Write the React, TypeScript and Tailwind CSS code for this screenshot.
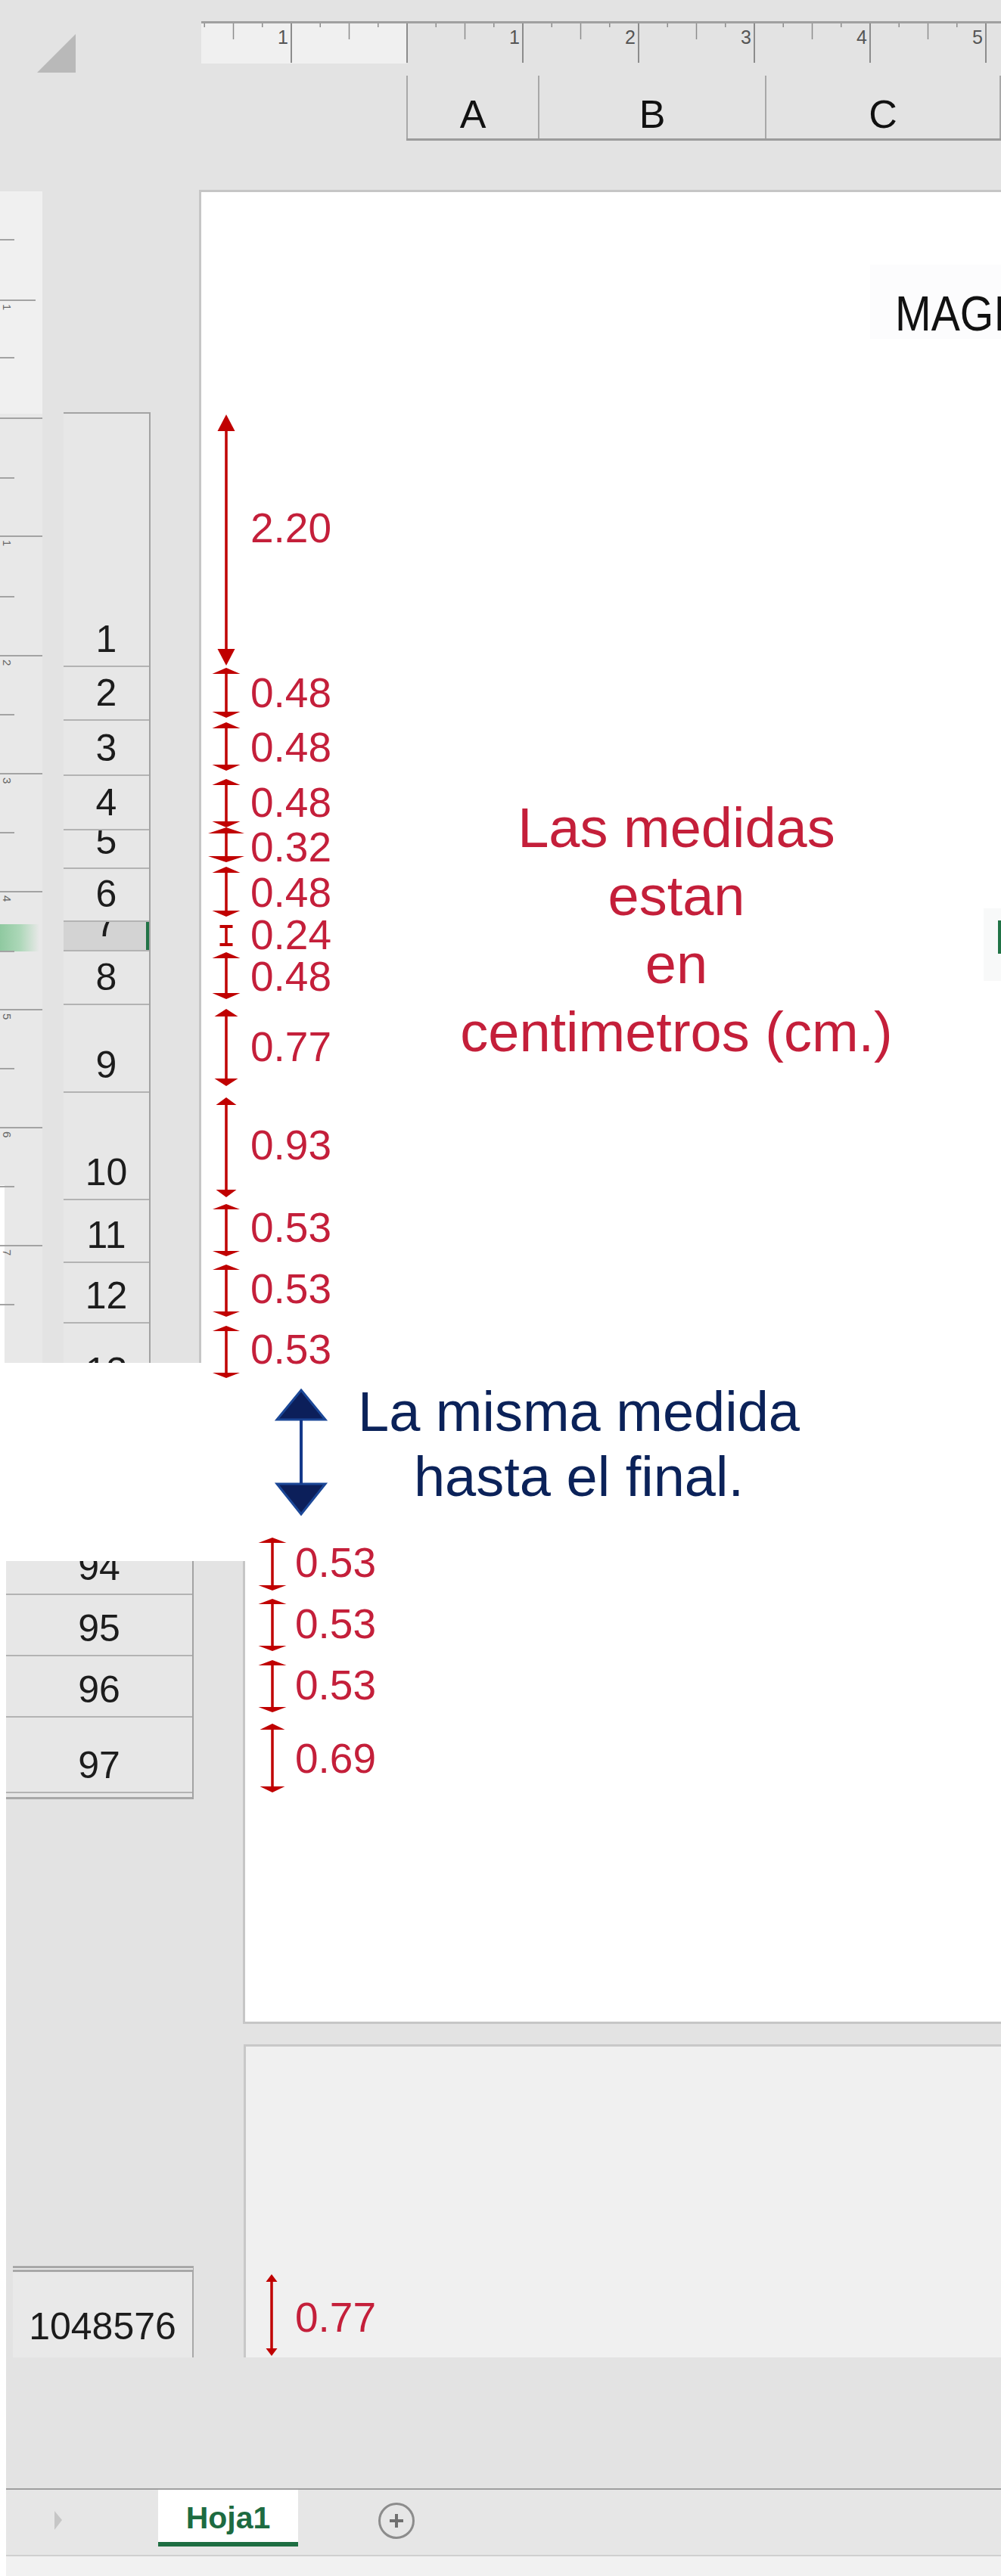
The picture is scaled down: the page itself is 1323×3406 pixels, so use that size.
import React from 'react';

const RED = '#c00000';

const TOP_ROWS = [
  { n: '1', h: 335 },
  { n: '2', h: 71 },
  { n: '3', h: 73 },
  { n: '4', h: 72 },
  { n: '5', h: 51 },
  { n: '6', h: 70 },
  { n: '7', h: 39, sel: true },
  { n: '8', h: 71 },
  { n: '9', h: 116 },
  { n: '10', h: 142 },
  { n: '11', h: 83 },
  { n: '12', h: 80 },
  { n: '13', h: 100 },
];

const BOTTOM_ROWS = [
  { n: '94', h: 45 },
  { n: '95', h: 81 },
  { n: '96', h: 81 },
  { n: '97', h: 100 },
];

// dimension arrows: x, top, bottom, head width, head height, bar = I-beam
type Dim = { x: number; y1: number; y2: number; w: number; h: number; bar?: boolean };

const DIMS: Dim[] = [
  { x: 299, y1: 548, y2: 880, w: 23, h: 22 },
  { x: 299, y1: 883, y2: 949, w: 37, h: 8 },
  { x: 299, y1: 955, y2: 1019, w: 37, h: 8 },
  { x: 299, y1: 1030, y2: 1094, w: 37, h: 8 },
  { x: 299, y1: 1094, y2: 1140, w: 48, h: 8 },
  { x: 299, y1: 1146, y2: 1212, w: 37, h: 8 },
  { x: 299, y1: 1223, y2: 1251, w: 17, h: 4, bar: true },
  { x: 299, y1: 1259, y2: 1321, w: 37, h: 8 },
  { x: 299, y1: 1334, y2: 1436, w: 31, h: 10 },
  { x: 299, y1: 1451, y2: 1583, w: 27, h: 10 },
  { x: 299, y1: 1592, y2: 1661, w: 36, h: 7 },
  { x: 299, y1: 1672, y2: 1741, w: 36, h: 7 },
  { x: 299, y1: 1753, y2: 1822, w: 36, h: 7 },
  { x: 360, y1: 2033, y2: 2103, w: 37, h: 7 },
  { x: 360, y1: 2114, y2: 2183, w: 37, h: 7 },
  { x: 360, y1: 2195, y2: 2264, w: 37, h: 7 },
  { x: 360, y1: 2279, y2: 2370, w: 33, h: 8 },
  { x: 359, y1: 3007, y2: 3115, w: 15, h: 10 },
];

const LABELS = [
  { t: '2.20', x: 333, b: 718 },
  { t: '0.48', x: 333, b: 936 },
  { t: '0.48', x: 333, b: 1008 },
  { t: '0.48', x: 333, b: 1081 },
  { t: '0.32', x: 333, b: 1140 },
  { t: '0.48', x: 333, b: 1200 },
  { t: '0.24', x: 333, b: 1256 },
  { t: '0.48', x: 333, b: 1311 },
  { t: '0.77', x: 333, b: 1404 },
  { t: '0.93', x: 333, b: 1534 },
  { t: '0.53', x: 333, b: 1643 },
  { t: '0.53', x: 333, b: 1724 },
  { t: '0.53', x: 333, b: 1804 },
  { t: '0.53', x: 392, b: 2086 },
  { t: '0.53', x: 392, b: 2167 },
  { t: '0.53', x: 392, b: 2248 },
  { t: '0.69', x: 392, b: 2345 },
  { t: '0.77', x: 392, b: 3084 },
];

function DimArrow({ d }: { d: Dim }) {
  if (d.bar) {
    return (
      <g fill={RED}>
        <rect x={d.x - 1.75} y={d.y1} width={3.5} height={d.y2 - d.y1} />
        <rect x={d.x - d.w / 2} y={d.y1} width={d.w} height={d.h} />
        <rect x={d.x - d.w / 2} y={d.y2 - d.h} width={d.w} height={d.h} />
      </g>
    );
  }
  return (
    <g fill={RED}>
      <rect x={d.x - 1.75} y={d.y1 + d.h - 1} width={3.5} height={d.y2 - d.y1 - 2 * d.h + 2} />
      <polygon points={`${d.x},${d.y1} ${d.x + d.w / 2},${d.y1 + d.h} ${d.x - d.w / 2},${d.y1 + d.h}`} />
      <polygon points={`${d.x},${d.y2} ${d.x + d.w / 2},${d.y2 - d.h} ${d.x - d.w / 2},${d.y2 - d.h}`} />
    </g>
  );
}

function HRuler() {
  const ticks = [];
  for (let k = -7; k <= 20; k++) {
    const x = 272 + k * 38.25;
    const len = k % 4 === 0 ? 52 : k % 2 === 0 ? 21 : 5;
    ticks.push(<line key={k} x1={x} y1={0} x2={x} y2={len} stroke="#8c8c8c" strokeWidth={k % 4 === 0 ? 2 : 1.5} />);
    const label = k === -4 ? '1' : k > 0 && k % 4 === 0 ? String(k / 4) : null;
    if (label) {
      ticks.push(
        <text key={`l${k}`} x={x - 4} y={27} textAnchor="end" fontSize={25} fill="#555" fontFamily="Liberation Sans, Arial, sans-serif">
          {label}
        </text>
      );
    }
  }
  return (
    <svg className="absolute left-0 top-0" width={1057} height={53}>
      {ticks}
    </svg>
  );
}

function VRuler() {
  const longs = [146, 302, 458, 616, 772, 928, 1084, 1240, 1396];
  const shorts = [66, 222, 381, 538, 694, 850, 1007, 1162, 1318, 1474];
  const labels: [number, string][] = [
    [146, '1'], [458, '1'], [616, '2'], [772, '3'], [928, '4'], [1084, '5'], [1240, '6'], [1396, '7'],
  ];
  return (
    <svg className="absolute left-0 top-0" width={56} height={1551}>
      {shorts.map((y) => (
        <line key={`s${y}`} x1={0} y1={y} x2={19} y2={y} stroke="#a3a3a3" strokeWidth={2} />
      ))}
      {longs.map((y) => (
        <line key={`g${y}`} x1={0} y1={y} x2={y < 296 ? 47 : 56} y2={y} stroke="#a3a3a3" strokeWidth={2} />
      ))}
      {labels.map(([y, t]) => (
        <text key={`t${y}`} transform={`translate(4 ${y + 5}) rotate(90)`} fontSize={15} fill="#666" fontFamily="Liberation Sans, Arial, sans-serif">
          {t}
        </text>
      ))}
    </svg>
  );
}

function RowHead({ n, h, sel }: { n: string; h: number; sel?: boolean }) {
  return (
    <div
      className={`relative flex items-end justify-center overflow-hidden border-b-2 border-[#b3b3b3] pb-[10px] text-[50px] leading-none text-[#1c1c1c] ${sel ? 'bg-[#d3d3d3]' : ''}`}
      style={{ height: h }}
    >
      {n}
      {sel && <div className="absolute right-0 top-0 h-full w-[4px] bg-[#217346]" />}
    </div>
  );
}

export default function App() {
  return (
    <div className="relative h-[3406px] w-[1323px] overflow-hidden bg-[#e3e3e3] font-['Liberation_Sans',Arial,sans-serif]">
      {/* top: ruler + column headers */}
      <div className="flex h-[251px]">
        <div className="w-[266px] shrink-0 pl-[49px] pt-[45px]">
          <svg width="51" height="51">
            <polygon points="51,0 51,51 0,51" fill="#b9b9b9" />
          </svg>
        </div>
        <div className="flex min-w-0 flex-1 flex-col">
          <div className="relative mt-[28px] h-[56px] border-t-[3px] border-[#a0a0a0]">
            <div className="h-full w-[271px] bg-[#f0f0f0]" />
            <HRuler />
          </div>
          <div className="ml-[271px] mt-[16px] flex h-[86px] border-b-[3px] border-[#9c9c9c] text-[52px] leading-none text-[#111]">
            <div className="flex w-[174px] shrink-0 items-end justify-center border-l-2 border-[#a8a8a8] pb-[6px]">A</div>
            <div className="flex w-[300px] shrink-0 items-end justify-center border-l-2 border-[#a8a8a8] pb-[6px]">B</div>
            <div className="flex w-[310px] shrink-0 items-end justify-center border-l-2 border-[#a8a8a8] pb-[6px]">C</div>
            <div className="min-w-0 flex-1 border-l-2 border-[#a8a8a8]" />
          </div>
        </div>
      </div>

      {/* upper sheet body */}
      <div className="flex h-[1551px] overflow-hidden">
        <div className="relative flex w-[56px] shrink-0 flex-col">
          <div className="mt-[2px] h-[294px] bg-[#f0f0f0]" />
          <div className="flex-1 bg-[#e8e8e8]" />
          <div className="absolute left-0 top-[971px] h-[36px] w-[52px] bg-linear-to-r from-[#8fc9a0] via-[#acd7b8] to-[#e8e8e8]" />
          <div className="absolute bottom-0 left-0 h-[235px] w-[6px] bg-white" />
          <VRuler />
        </div>
        <div className="ml-[28px] mt-[294px] w-[115px] shrink-0 self-start border-r-2 border-t-2 border-[#a3a3a3] bg-[#e7e7e7]">
          {TOP_ROWS.map((r) => (
            <RowHead key={r.n} n={r.n} h={r.h} sel={r.sel} />
          ))}
        </div>
        <div className="w-[64px] shrink-0" />
        <div className="relative min-w-0 flex-1 border-l-[3px] border-t-[3px] border-[#c6c6c6] bg-white">
          <div className="ml-[884px] mt-[96px] h-[98px] overflow-hidden bg-[#fcfcfd] pl-[33px] pt-[32px]">
            <div className="origin-left scale-x-[0.88] whitespace-nowrap text-[65px] leading-none text-[#111]">MAGI</div>
          </div>
          <div className="absolute right-0 top-[947px] h-[96px] w-[23px] bg-[#f8f9f9]" />
          <div className="absolute right-0 top-[963px] h-[44px] w-[4px] bg-[#217346]" />
        </div>
      </div>

      {/* white band */}
      <div className="h-[262px] bg-white" />

      {/* lower sheet */}
      <div className="flex h-[1342px]">
        <div className="w-[8px] shrink-0 bg-white" />
        <div className="flex min-w-0 flex-1 flex-col">
          <div className="flex h-[612px]">
            <div className="w-[248px] shrink-0 self-start border-r-2 border-[#a3a3a3] bg-[#e7e7e7]">
              {BOTTOM_ROWS.map((r) => (
                <RowHead key={r.n} n={r.n} h={r.h} />
              ))}
              <div className="h-[8px] border-b-[3px] border-[#a8a8a8]" />
            </div>
            <div className="w-[65px] shrink-0" />
            <div className="min-w-0 flex-1 border-b-[3px] border-l-[3px] border-[#c6c6c6] bg-white" />
          </div>
          <div className="h-[27px]" />
          <div className="flex h-[414px]">
            <div className="ml-[9px] mt-[293px] flex w-[239px] shrink-0 items-end justify-center border-r-2 border-t-[8px] border-double border-[#a8a8a8] bg-[#e9e9e9] pb-[16px] text-[50px] leading-none text-[#1c1c1c]">
              1048576
            </div>
            <div className="w-[66px] shrink-0" />
            <div className="min-w-0 flex-1 border-l-[3px] border-t-[3px] border-[#c8c8c8] bg-[#f0f0f0]" />
          </div>
          <div className="h-[173px]" />
          <div className="flex h-[88px] border-t-2 border-[#9f9f9f] bg-[#e6e6e6]">
            <svg className="ml-[64px] mt-[28px] shrink-0" width="10" height="25">
              <polygon points="0,0 10,12 0,25" fill="#c6c6c6" />
            </svg>
            <div className="ml-[127px] h-[75px] w-[185px] shrink-0 border-b-[6px] border-[#1e6e42] bg-white pt-[17px] text-center text-[41px] font-bold leading-none text-[#1d6b41]">
              Hoja1
            </div>
            <svg className="ml-[105px] mt-[16px] shrink-0" width="50" height="50">
              <circle cx="25" cy="25" r="22.5" fill="none" stroke="#8c8c8c" strokeWidth="3" />
              <line x1="16" y1="25" x2="34" y2="25" stroke="#707070" strokeWidth="4" />
              <line x1="25" y1="16" x2="25" y2="34" stroke="#707070" strokeWidth="4" />
            </svg>
          </div>
          <div className="h-[28px] border-t-2 border-[#cfcfcf] bg-[#f1f1f1]" />
        </div>
      </div>

      {/* annotations over the sheet */}
      <div className="pointer-events-none absolute inset-0">
        <svg className="absolute left-0 top-0" width={1323} height={3406}>
          {DIMS.map((d, i) => (
            <DimArrow key={i} d={d} />
          ))}
          <g fill="#0c1f5a" stroke="#1b4797" strokeWidth={3}>
            <polygon points="398,1838 430,1877 366,1877" />
            <polygon points="366,1962 430,1962 398,2002" />
          </g>
          <rect x={396} y={1877} width={4} height={85} fill="#15398a" />
        </svg>
        {LABELS.map((l, i) => (
          <div
            key={i}
            className="absolute whitespace-nowrap text-[55px] leading-none text-[#c41f3a]"
            style={{ left: l.x - 2, top: l.b - 47 }}
          >
            {l.t}
          </div>
        ))}
        <div className="absolute left-[594px] top-[1050px] w-[600px] text-center text-[74px] leading-[90px] text-[#c41f3a]">
          Las medidas
          <br />
          estan
          <br />
          en
          <br />
          centimetros (cm.)
        </div>
        <div className="absolute left-[440px] top-[1824px] w-[650px] text-center text-[74px] leading-[86px] text-[#0b2259]">
          La misma medida
          <br />
          hasta el final.
        </div>
      </div>
    </div>
  );
}
